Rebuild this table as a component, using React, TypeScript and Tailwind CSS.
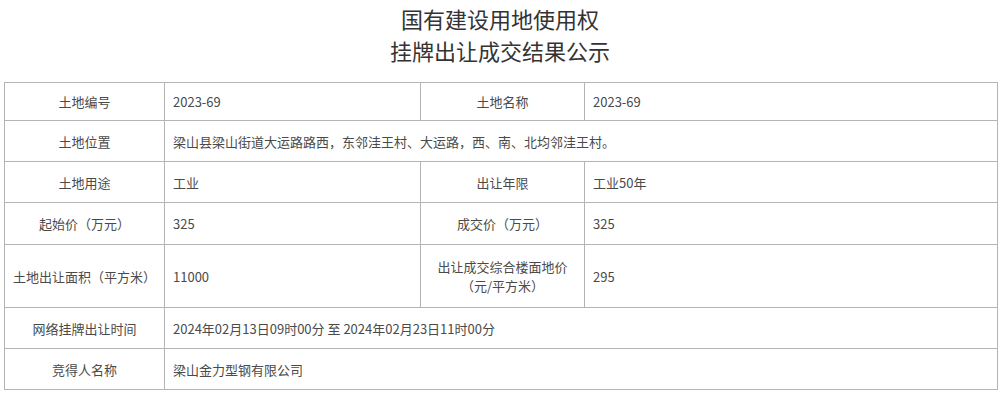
const font = {
  fontFamily: '"Noto Sans CJK SC", "Noto Sans", sans-serif',
};

type CellProps = {
  children?: React.ReactNode;
  label?: boolean;
  span?: string;
};

const Cell: React.FC<CellProps> = ({ children, label, span = "" }) => (
  <div
    className={`flex items-center border-r border-b border-[#b4b4b4] text-[13px] leading-[19px] text-[#4a4a4a] ${
      label ? "justify-center text-center" : "justify-start pl-2"
    } ${span}`}
  >
    {children}
  </div>
);

export default function App() {
  return (
    <div className="w-[1000px] h-[394px] bg-white" style={font}>
      <div className="pt-[2px] pb-4 text-center text-[22px] leading-8 text-[#333]">
        <p>国有建设用地使用权</p>
        <p>挂牌出让成交结果公示</p>
      </div>

      <div className="ml-1 grid w-[994px] grid-cols-[160px_256px_164px_413px] grid-rows-[38px_41px_41px_42px_63px_41px_41px] border-t border-l border-[#b4b4b4]">
        <Cell label>土地编号</Cell>
        <Cell>2023-69</Cell>
        <Cell label>土地名称</Cell>
        <Cell>2023-69</Cell>

        <Cell label>土地位置</Cell>
        <Cell span="col-span-3">
          梁山县梁山街道大运路路西，东邻洼王村、大运路，西、南、北均邻洼王村。
        </Cell>

        <Cell label>土地用途</Cell>
        <Cell>工业</Cell>
        <Cell label>出让年限</Cell>
        <Cell>工业50年</Cell>

        <Cell label>起始价（万元）</Cell>
        <Cell>325</Cell>
        <Cell label>成交价（万元）</Cell>
        <Cell>325</Cell>

        <Cell label>土地出让面积（平方米）</Cell>
        <Cell>11000</Cell>
        <Cell label>
          <span>
            出让成交综合楼面地价
            <br />
            （元/平方米）
          </span>
        </Cell>
        <Cell>295</Cell>

        <Cell label>网络挂牌出让时间</Cell>
        <Cell span="col-span-3">
          2024年02月13日09时00分 至 2024年02月23日11时00分
        </Cell>

        <Cell label>竞得人名称</Cell>
        <Cell span="col-span-3">梁山金力型钢有限公司</Cell>
      </div>
    </div>
  );
}
